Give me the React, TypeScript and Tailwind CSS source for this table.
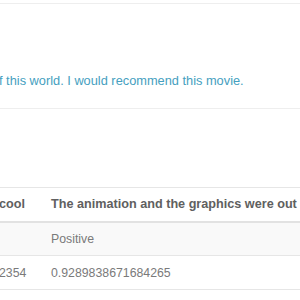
const rows = [
  { score: "", value: "Positive" },
  { score: "2354", value: "0.9289838671684265" },
];

export default function App() {
  return (
    <div
      className="w-[300px] h-[300px] overflow-hidden bg-white text-[#7a7a7a]"
      style={{ fontFamily: '"Liberation Sans", Arial, sans-serif' }}
    >
      <div className="h-[3px]" />
      {/* review panel */}
      <div className="border-y border-[#eee] h-[106px] flex items-end pb-[20px]">
        <p className="text-[12.8px] leading-[14px] text-[#45a0c0] whitespace-nowrap -ml-[1px]">
          f this world. I would recommend this movie.
        </p>
      </div>

      <div className="h-[78px]" />

      <table className="-ml-[1px] w-[330px] border-collapse text-[12.3px] leading-[14px] whitespace-nowrap text-left">
        <thead>
          <tr className="border-t border-[#e6e6e6] border-b-2 border-b-[#e2e2e2]">
            <th className="w-[52px] h-[34px] p-0 font-bold text-[#606060] text-[12.65px]">cool</th>
            <th className="h-[34px] p-0 font-bold text-[#606060] text-[12.65px]">
              The animation and the graphics were out
            </th>
          </tr>
        </thead>
        <tbody>
          {rows.map((r, i) => (
            <tr
              key={i}
              className={`border-b border-[#e6e6e6] ${i % 2 === 0 ? "bg-[#f9f9f9]" : ""}`}
            >
              <td className="h-[34px] p-0">{r.score}</td>
              <td className="h-[34px] p-0">{r.value}</td>
            </tr>
          ))}
        </tbody>
      </table>
    </div>
  );
}
